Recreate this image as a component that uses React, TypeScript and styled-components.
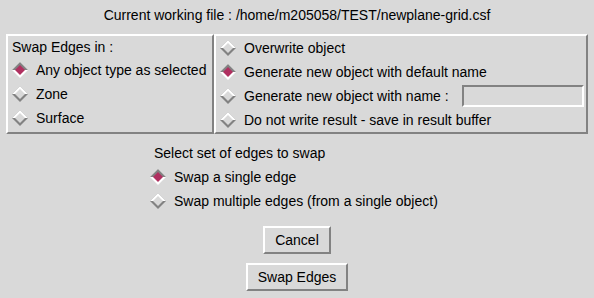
import React from 'react';
import styled, { createGlobalStyle } from 'styled-components';

const BG = '#d9d9d9';
const LIGHT = '#ffffff';
const DARK = '#828282';
const SELECT = '#b03060';

const GlobalStyle = createGlobalStyle`
  html, body {
    margin: 0;
    padding: 0;
    background: ${BG};
  }
  body {
    font-family: "Liberation Sans", Arial, sans-serif;
    font-size: 14px;
    color: #000;
  }
`;

const Page = styled.div`
  width: 594px;
  height: 298px;
  display: flex;
  flex-direction: column;
  align-items: center;
  box-sizing: border-box;
`;

const Title = styled.div`
  height: 34px;
  line-height: 30px;
  text-align: center;
`;

const Frames = styled.div`
  display: flex;
  width: 582px;
  height: 100px;
`;

const Frame = styled.div<{ $width?: number }>`
  box-sizing: border-box;
  display: flex;
  flex-direction: column;
  min-width: 0;
  padding-left: 4px;
  border: 2px solid;
  border-color: ${LIGHT} ${DARK} ${DARK} ${LIGHT};
  ${({ $width }) => ($width ? `width: ${$width}px; flex: none;` : 'flex: 1;')}
`;

const Label = styled.div<{ $h: number }>`
  height: ${({ $h }) => $h}px;
  line-height: ${({ $h }) => $h}px;
  white-space: nowrap;
`;

const Row = styled.label`
  display: flex;
  align-items: center;
  height: 24px;
  gap: 8px;
  white-space: nowrap;
`;

const Entry = styled.div`
  box-sizing: border-box;
  flex: 1;
  min-width: 0;
  height: 22px;
  margin: 0 2px 0 5px;
  border: 2px solid;
  border-color: ${DARK} ${LIGHT} ${LIGHT} ${DARK};
  background: ${BG};
`;

const EdgeBlock = styled.div`
  width: 294px;
  margin-top: 7px;
  display: flex;
  flex-direction: column;
  box-sizing: border-box;
`;

const Indent = styled.div`
  padding-left: 4px;
`;

const Buttons = styled.div`
  display: flex;
  flex-direction: column;
  align-items: center;
  gap: 9px;
  margin-top: 13px;
`;

const Button = styled.button`
  box-sizing: border-box;
  height: 28px;
  padding: 0 10px;
  font: inherit;
  color: #000;
  background: ${BG};
  border: 2px solid;
  border-color: ${LIGHT} ${DARK} ${DARK} ${LIGHT};
  border-radius: 0;
`;

const Diamond = ({ on }: { on?: boolean }) => (
  <svg width="16" height="16" viewBox="0 0 16 16" style={{ flex: 'none' }}>
    <polygon points="8,0 16,8 8,16 0,8" fill={on ? LIGHT : DARK} />
    <polygon points="0,8 8,0 16,8" fill={on ? DARK : LIGHT} />
    <polygon points="8,3 13,8 8,13 3,8" fill={on ? SELECT : BG} />
  </svg>
);

const Radio = ({ on, children }: { on?: boolean; children: React.ReactNode }) => (
  <Row>
    <Diamond on={on} />
    {children}
  </Row>
);

export default function App() {
  return (
    <>
      <GlobalStyle />
      <Page>
        <Title>Current working file : /home/m205058/TEST/newplane-grid.csf</Title>
        <Frames>
          <Frame $width={208}>
            <Label $h={22}>Swap Edges in :</Label>
            <Radio on>Any object type as selected</Radio>
            <Radio>Zone</Radio>
            <Radio>Surface</Radio>
          </Frame>
          <Frame>
            <Radio>Overwrite object</Radio>
            <Radio on>Generate new object with default name</Radio>
            <Radio>
              <span>Generate new object with name :</span>
              <Entry />
            </Radio>
            <Radio>Do not write result - save in result buffer</Radio>
          </Frame>
        </Frames>
        <EdgeBlock>
          <Indent>
            <Label $h={24}>Select set of edges to swap</Label>
          </Indent>
          <Radio on>Swap a single edge</Radio>
          <Radio>Swap multiple edges (from a single object)</Radio>
        </EdgeBlock>
        <Buttons>
          <Button>Cancel</Button>
          <Button>Swap Edges</Button>
        </Buttons>
      </Page>
    </>
  );
}
